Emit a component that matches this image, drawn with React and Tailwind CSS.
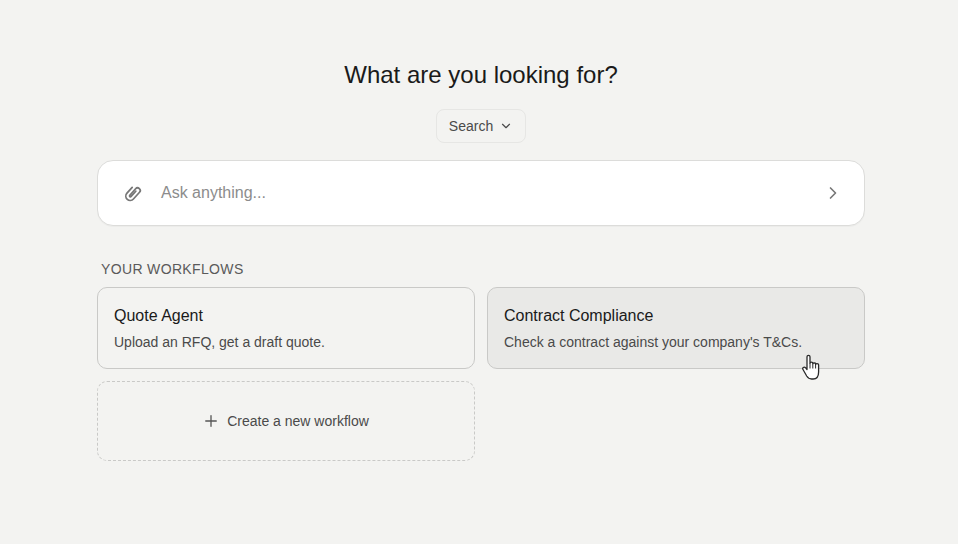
import { ChevronDown, ChevronRight, Plus } from "lucide-react";

const ClipIcon = () => (
  <svg width="20" height="20" viewBox="-1 -1 22 22" fill="none" className="shrink-0">
    <g transform="rotate(42 10 10)" stroke="#777777" strokeWidth="1.900" strokeLinecap="round">
      <path d="M5.200 6v8.600a4.800 4.800 0 0 0 9.600 0V4.600a2.900 2.900 0 0 0-5.800 0v9.600a1 1 0 0 0 2 0V6.500" />
    </g>
  </svg>
);

const HandCursor = () => (
  <svg
    className="absolute left-[802px] top-[354px]"
    width="18"
    height="26"
    viewBox="0 0 18 26"
    fill="none"
  >
    <path
      d="M5 2.700C5 .8 8 .8 8 2.700V9c0-1.200 2.800-1.200 2.800 0v.7c0-1.100 2.800-1.100 2.800 0v.8c0-1.100 3-1.100 3 .3V18c0 4-2 7-5.500 7H9.500c-2.500 0-3.500-1-4.800-3L1 15.500c-1-1.700 1-3.300 2.500-1.800L5 15.500V2.700Z"
      fill="#fff"
      stroke="#2a2a2a"
      strokeWidth="1.300"
      strokeLinejoin="round"
    />
    <path d="M8 9v5.500M10.800 9.700v4.800M13.600 10.500v4" stroke="#2a2a2a" strokeWidth="1" />
  </svg>
);

const WorkflowCard = ({ title, desc, active }) => (
  <div
    className={`h-[82px] rounded-[10px] border border-[#c9c9c7] px-4 pt-[18px] ${
      active ? "bg-[#e9e9e7]" : "bg-[#f3f3f1]"
    }`}
  >
    <div className="text-base leading-[20px] text-[#1a1a1a]">{title}</div>
    <div className="mt-[6px] text-sm leading-[20px] text-[#4a4a4a]">{desc}</div>
  </div>
);

const App = () => {
  return (
    <div className="relative flex h-[544px] w-full justify-center overflow-hidden bg-[#f3f3f1] pl-1 font-['Liberation_Sans',Arial,sans-serif]">
      <div className="flex w-[768px] flex-col items-center pt-[61px]">
        <h1 className="text-2xl leading-[28px] text-[#1a1a1a]">What are you looking for?</h1>

        <button className="mt-[20px] flex h-[34px] w-[90px] items-center justify-center gap-[6px] rounded-lg border border-[#e6e6e4] text-sm text-[#4a4a4a]">
          Search
          <ChevronDown size={14} strokeWidth={2} />
        </button>

        <div className="mt-[17px] flex h-[66px] w-full items-center rounded-2xl border border-[#dcdcda] bg-white pl-[25px] pr-[21px] shadow-[0_1px_1px_rgba(0,0,0,0.03)]">
          <ClipIcon />
          <span className="ml-[18px] flex-1 text-base text-[#8c8c8c]">Ask anything...</span>
          <ChevronRight size={20} strokeWidth={2} className="text-[#777777]" />
        </div>

        <div className="mt-[35px] w-full pl-1 text-sm leading-[16px] tracking-[0.35px] text-[#5a5a5a]">
          YOUR WORKFLOWS
        </div>

        <div className="mt-[10px] grid w-full grid-cols-2 gap-3">
          <WorkflowCard title="Quote Agent" desc="Upload an RFQ, get a draft quote." />
          <WorkflowCard
            active
            title="Contract Compliance"
            desc="Check a contract against your company's T&Cs."
          />
          <div className="flex h-[80px] items-center justify-center gap-[7px] rounded-[10px] border border-dashed border-[#c9c9c7] pr-px text-sm text-[#4a4a4a]">
            <Plus size={18} strokeWidth={1.75} className="text-[#555555]" />
            Create a new workflow
          </div>
        </div>
      </div>
      <HandCursor />
    </div>
  );
};

export default App;
